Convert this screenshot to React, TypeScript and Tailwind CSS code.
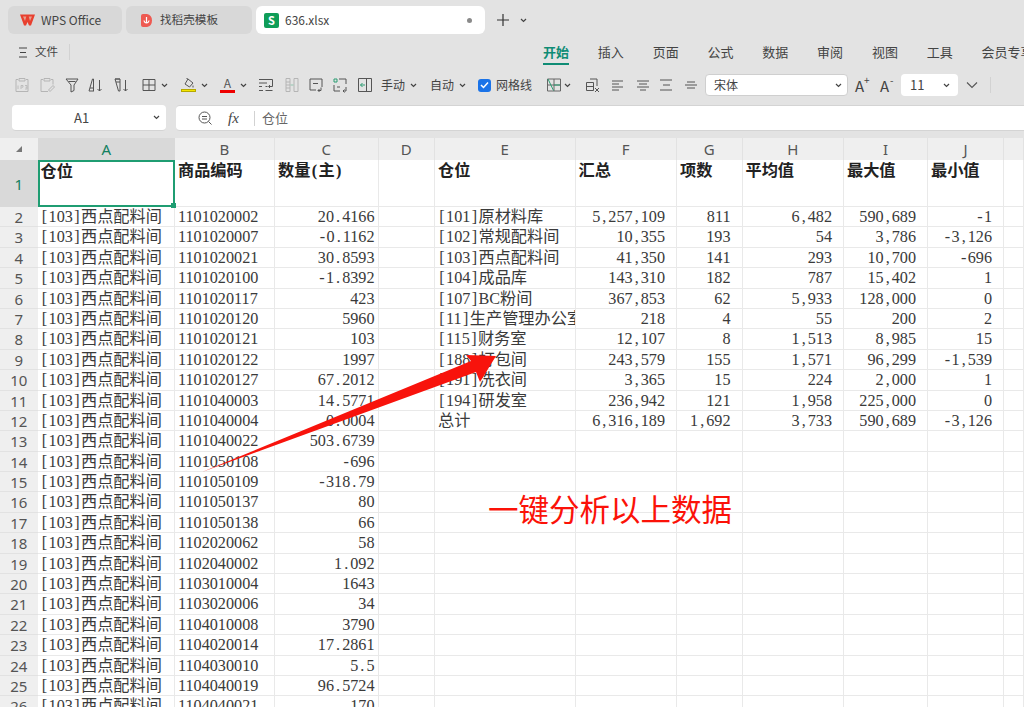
const COLS = "grid grid-rows-[minmax(0,1fr)] grid-cols-[37.5px_137.5px_100px_103.5px_56.5px_140.5px_101.5px_65.5px_101.5px_84px_76px_20px]";

const LEFT: [string, string][] = [
  ["1101020002", "20.4166"],
  ["1101020007", "-0.1162"],
  ["1101020021", "30.8593"],
  ["1101020100", "-1.8392"],
  ["1101020117", "423"],
  ["1101020120", "5960"],
  ["1101020121", "103"],
  ["1101020122", "1997"],
  ["1101020127", "67.2012"],
  ["1101040003", "14.5771"],
  ["1101040004", "0.0004"],
  ["1101040022", "503.6739"],
  ["1101050108", "-696"],
  ["1101050109", "-318.79"],
  ["1101050137", "80"],
  ["1101050138", "66"],
  ["1102020062", "58"],
  ["1102040002", "1.092"],
  ["1103010004", "1643"],
  ["1103020006", "34"],
  ["1104010008", "3790"],
  ["1104020014", "17.2861"],
  ["1104030010", "5.5"],
  ["1104040019", "96.5724"],
  ["1104040021", "170"],
];

const RIGHT: string[][] = [
  ["[101]原材料库", "5,257,109", "811", "6,482", "590,689", "-1"],
  ["[102]常规配料间", "10,355", "193", "54", "3,786", "-3,126"],
  ["[103]西点配料间", "41,350", "141", "293", "10,700", "-696"],
  ["[104]成品库", "143,310", "182", "787", "15,402", "1"],
  ["[107]BC粉间", "367,853", "62", "5,933", "128,000", "0"],
  ["[11]生产管理办公室", "218", "4", "55", "200", "2"],
  ["[115]财务室", "12,107", "8", "1,513", "8,985", "15"],
  ["[188]打包间", "243,579", "155", "1,571", "96,299", "-1,539"],
  ["[191]洗衣间", "3,365", "15", "224", "2,000", "1"],
  ["[194]研发室", "236,942", "121", "1,958", "225,000", "0"],
  ["总计", "6,316,189", "1,692", "3,733", "590,689", "-3,126"],
];

// the sheet font is half width for every latin char, punctuation included
function Half({ text }: { text: string }) {
  return (
    <>
      {text.split(/([\[\]().,\-])/).map((part, i) =>
        i % 2 === 1 ? (
          <span key={i} className="inline-block w-[8.1px] text-center">{part}</span>
        ) : (
          part
        )
      )}
    </>
  );
}

function Chevron({ className = "" }: { className?: string }) {
  return (
    <svg width="7" height="5" viewBox="0 0 7 5" className={`shrink-0 ${className}`}>
      <path d="M1 1l2.5 2.5L6 1" fill="none" stroke="#444" strokeWidth="1.2" />
    </svg>
  );
}

function Ico({ children, className = "", w = 16 }: { children: React.ReactNode; className?: string; w?: number }) {
  return (
    <svg width={w} height="16" viewBox={`0 0 ${w} 16`} fill="none" stroke="#555" strokeWidth="1" className={`shrink-0 ${className}`}>
      {children}
    </svg>
  );
}

function Cell({ text, right, acct, bold }: { text?: string; right?: boolean; acct?: boolean; bold?: boolean }) {
  return (
    <div
      className={`overflow-hidden whitespace-nowrap border-r border-b border-[#e9e9e9] ${right ? "text-right" : ""} ${acct ? "pr-[11px]" : right ? "pr-[3px]" : "pl-[3px]"} ${bold ? "font-bold text-[#222] pt-[1px]" : ""}`}
    >
      {text ? <Half text={text} /> : null}
    </div>
  );
}

function TabBar() {
  return (
    <div className="flex items-center h-[28px] mt-[6px] pl-[8px] gap-[4px] text-[12px] text-[#444]">
      <div className="flex items-center w-[114px] h-[28px] rounded-[6px] bg-[#d8d8d8] pl-[12px] gap-[6px]">
        <svg width="15" height="12" viewBox="0 0 15 12" className="shrink-0">
          <path d="M0 0.500h15L11 11.500H9L7.500 8 6 11.500H4z" fill="#e8402f" />
          <path d="M3 2.500h3.300L5 7zM8.700 2.500H12L10 7z" fill="#e6a08f" />
        </svg>
        <span>WPS Office</span>
      </div>
      <div className="flex items-center w-[126px] h-[28px] rounded-[6px] bg-[#d8d8d8] pl-[14px] gap-[7px]">
        <svg width="13" height="15" viewBox="0 0 13 15" className="shrink-0">
          <path d="M1 3q0-2 2-2h4q5 1 5 6.500t-5 6.500h-4q-2 0-2-2z" fill="#ee5a52" />
          <path d="M6.500 4v6M6.500 10q-2 0-2.500-2.500M6.500 10q2 0 2.500-2.500" stroke="#fff" strokeWidth="1.200" fill="none" />
        </svg>
        <span className="text-[11.600px]">找稻壳模板</span>
      </div>
      <div className="flex items-center w-[229px] h-[28px] rounded-[6px] bg-white pl-[8px] pr-[13px] gap-[6px]">
        <span className="flex items-center justify-center w-[15px] h-[15px] rounded-[2px] bg-[#0f9d58] text-white text-[11px] font-bold">S</span>
        <span>636.xlsx</span>
        <span className="ml-auto w-[5px] h-[5px] rounded-full bg-[#8a8a8a]" />
      </div>
      <svg width="14" height="14" viewBox="0 0 14 14" className="ml-[7px]">
        <path d="M7 1v12M1 7h12" stroke="#333" strokeWidth="1.200" />
      </svg>
      <Chevron className="ml-[6px]" />
    </div>
  );
}

function MenuRow() {
  const items = ["插入", "页面", "公式", "数据", "审阅", "视图", "工具", "会员专享"];
  return (
    <div className="flex items-center h-[26px] mt-[5px] text-[13px] text-[#444] overflow-hidden">
      <svg width="10" height="11" viewBox="0 0 10 11" className="ml-[18px] shrink-0">
        <path d="M1 1h8M2 5.500h6M1 10h8" stroke="#444" strokeWidth="1.100" />
      </svg>
      <span className="ml-[7px] text-[11.500px] whitespace-nowrap shrink-0">文件</span>
      <div className="w-px h-[16px] bg-[#d2d2d2] ml-[11px] shrink-0" />
      <div className="flex flex-col items-center ml-[473px] pt-[3px] shrink-0">
        <span className="font-bold text-[#0f8c75] leading-[20px]">开始</span>
        <div className="w-[26px] h-[2px] bg-[#0f8c75] mt-[1px]" />
      </div>
      <div className="flex gap-[28.800px] ml-[28.800px] whitespace-nowrap">
        {items.map((t) => (
          <span key={t}>{t}</span>
        ))}
      </div>
    </div>
  );
}

function Toolbar() {
  return (
    <div className="flex items-center h-[28px] mt-[6px] pl-[14px] text-[12px] text-[#444] whitespace-nowrap overflow-hidden">
      {/* paste values */}
      <Ico>
        <g stroke="#b5b5b5">
          <path d="M4 2.500H2v12h12v-12h-2M5 1.500h6v2.500H5z" />
          <path d="M4 12V8.500M7 12V8.500h2v1.700H7.500M11 8.500h2v3.500h-2M11.500 10.200H13" strokeWidth="0.800" />
        </g>
      </Ico>
      {/* paste format */}
      <Ico className="ml-[9px]">
        <g stroke="#b5b5b5">
          <path d="M4 2.500H2v12h7M12 2.500h2v5M5 1.500h6v2.500H5z" />
          <path d="M9.500 13l4.500-4.500 1.500 1.500-4.500 4.500z" />
        </g>
      </Ico>
      {/* filter */}
      <Ico className="ml-[9px]">
        <path d="M2 2h12L10 8v5.500L7 15V8zM4.500 4.500h7" />
      </Ico>
      {/* sort asc */}
      <Ico className="ml-[8px]">
        <path d="M1 14L4.500 2h1v12M2 11h3.500M1 14h5M11.500 3v11M9.500 12l2 2 2-2" />
      </Ico>
      {/* sort desc */}
      <Ico className="ml-[10px]">
        <path d="M1 2h5v12M6 2h-5l3.500 12h1.500M2 5h4M11.500 3v11M9.500 12l2 2 2-2" />
      </Ico>
      {/* borders */}
      <Ico className="ml-[11px]">
        <path d="M2 2.500h12v11H2zM8 2.500v11M2 8h12" />
      </Ico>
      <Chevron className="ml-[4px]" />
      {/* fill colour */}
      <div className="flex flex-col items-center ml-[13px]">
        <svg width="12" height="10" viewBox="0 0 12 10" fill="none" stroke="#555">
          <path d="M5 1l5 4-3.500 4L2 6zM5 1L3.500 0.500M10 7.500v2" />
        </svg>
        <div className="w-[15px] h-[3px] bg-[#f5e600] mt-[1px] border border-[#b5a800]" />
      </div>
      <Chevron className="ml-[5px]" />
      {/* font colour */}
      <div className="flex flex-col items-center ml-[12px] w-[15px]">
        <span className="text-[12px] leading-[12px] text-[#555]">A</span>
        <div className="w-[15px] h-[3px] bg-[#ee0000] mt-[1px]" />
      </div>
      <Chevron className="ml-[5px]" />
      {/* wrap */}
      <Ico className="ml-[11px]">
        <path d="M1 2.500h9M1 6h8M1 9.500h3M1 13.500h4M10 2.500h4.500v7H11M12 8l-1.500 1.500L12 11M7.500 9.500h2M7.500 13.500h7" />
      </Ico>
      {/* merge */}
      <Ico className="ml-[10px]">
        <g stroke="#b5b5b5">
          <path d="M2 1.500h4v13H2zM10 1.500h4v13h-4zM2 5h4M2 8h4M2 11h4" />
          <path d="M6.500 8h3" stroke="#8fc4ad" />
        </g>
      </Ico>
      <Ico className="ml-[8px]">
        <path d="M2 2h12v8M2 2v11h6M5 6.500h5M13 10.500v3h-3M11.500 12l-1.500 1.500 1.500 1.500" />
      </Ico>
      <Ico className="ml-[8px]">
        <path d="M7 2h7v5M2 8v6h6M5 10h3M14 10v4h-3M12.500 12.500L11 14l1.500 1.500" />
        <path d="M2 2h3v3H2z" stroke="#2a9d72" />
      </Ico>
      <Ico className="ml-[9px]">
        <path d="M1.500 1.500h13v13h-13zM9.500 1.500v13" />
        <path d="M8 8H3.500M5.500 6L3.500 8l2 2" stroke="#2a9d72" />
      </Ico>
      <span className="ml-[8px]">手动</span>
      <Chevron className="ml-[5px]" />
      <span className="ml-[13px]">自动</span>
      <Chevron className="ml-[5px]" />
      <span className="flex items-center justify-center w-[13px] h-[13px] rounded-[3px] bg-[#1a73e8] ml-[12px]">
        <svg width="9" height="8" viewBox="0 0 9 8">
          <path d="M1 4l2.500 2.500L8 1.500" fill="none" stroke="#fff" strokeWidth="1.500" />
        </svg>
      </span>
      <span className="ml-[5px]">网格线</span>
      {/* freeze */}
      <Ico className="ml-[14px]">
        <path d="M1.500 2h13v12h-13zM8 2v12M1.500 8h13" stroke="#666" />
        <path d="M2 2l5.500 11.500M8 8h6" stroke="#2a9d72" />
      </Ico>
      <Chevron className="ml-[2px]" />
      {/* clear */}
      <Ico className="ml-[14px]">
        <path d="M5 2h7v7M1.500 5.500h7v8h-7zM1.500 9.500h7M10 11l4 4M14 11l-4 4" />
      </Ico>
      {/* aligns */}
      <Ico w={12} className="ml-[11px]">
        <path d="M0 4h11M0 7h7M0 10h11M0 13h7" />
      </Ico>
      <Ico w={12} className="ml-[13px]">
        <path d="M0 4h12M2 7h8M0 10h12M3 13h6" />
      </Ico>
      <Ico w={12} className="ml-[11px]">
        <path d="M0 3h12M3 8h7M0 13h12" />
      </Ico>
      <Ico w={12} className="ml-[13px]">
        <path d="M2 5h8M0 8h12M2 11h8" />
      </Ico>
      {/* font family */}
      <div className="flex items-center w-[143px] h-[22px] ml-[8px] shrink-0 rounded-[4px] bg-white border border-[#cfcfcf] pl-[8px] pr-[5px]">
        <span>宋体</span>
        <Chevron className="ml-auto" />
      </div>
      <span className="relative ml-[7px] w-[16px] shrink-0 text-[15px] leading-none">
        A<span className="absolute -top-[3px] left-[9px] text-[10px]">+</span>
      </span>
      <span className="relative ml-[9px] w-[16px] shrink-0 text-[15px] leading-none">
        A<span className="absolute -top-[3px] left-[10px] text-[10px]">-</span>
      </span>
      <div className="flex items-center w-[57px] h-[22px] ml-[5px] shrink-0 rounded-[4px] bg-white pl-[9px] pr-[8px] text-[13px]">
        <span>11</span>
        <Chevron className="ml-auto" />
      </div>
      <svg width="12" height="8" viewBox="0 0 12 8" className="ml-[8px] shrink-0">
        <path d="M1 1.500l5 5 5-5" fill="none" stroke="#555" strokeWidth="1.100" />
      </svg>
      <div className="w-px h-[16px] bg-[#d2d2d2] ml-[12px] shrink-0" />
    </div>
  );
}

function FormulaBar() {
  return (
    <div className="flex gap-[10px] h-[26px] mt-[6px] pl-[12px] text-[13px] text-[#444]">
      <div className="flex items-center w-[154px] rounded-[4px] bg-white pl-[62px] pr-[6px] border-b border-[#d4d4d4]">
        <span>A1</span>
        <Chevron className="ml-auto" />
      </div>
      <div className="flex items-center flex-1 rounded-l-[4px] bg-white pl-[22px] border-y border-[#d4d4d4]">
        <svg width="15" height="15" viewBox="0 0 15 15" fill="none" stroke="#555">
          <circle cx="6.500" cy="6.500" r="5.500" />
          <path d="M4 5.500h5M4 8h5M10.500 10.500l3 3" />
        </svg>
        <span className="ml-[15px] w-[15px] text-[15px] italic leading-none font-['Liberation_Serif',serif]">fx</span>
        <div className="w-px h-[15px] bg-[#d2d2d2] ml-[11px]" />
        <span className="ml-[7px] text-[#666]">仓位</span>
      </div>
    </div>
  );
}

function Sheet() {
  const heads = ["B", "C", "D", "E", "F", "G", "H", "I", "J", ""];
  return (
    <div className="mt-[7px] flex-1 overflow-hidden bg-white text-[16.200px] leading-[20px] text-[#3a3a3a] font-['Liberation_Serif','Noto_Sans_CJK_SC',serif]">
      {/* column header */}
      <div className={`${COLS} h-[22px] bg-[#efefef] text-[15px] text-[#555] font-['Noto_Sans',sans-serif] leading-[22px] text-center`}>
        <div className="flex items-center justify-center">
          <div className="w-0 h-0 border-l-[6px] border-l-transparent border-b-[6px] border-b-[#777]" />
        </div>
        <div className="bg-[#d9d9d9] text-[#12805f]">A</div>
        {heads.map((h, i) => (
          <div key={i} className="border-r border-[#e2e2e2]">{h}</div>
        ))}
      </div>

      {/* row 1 */}
      <div className={`${COLS} h-[47px]`}>
        <div className="bg-[#d9d9d9] text-[#12805f] text-[15px] flex items-center justify-center font-['Noto_Sans',sans-serif]">1</div>
        <div className="relative border-2 border-[#1f9d72] font-bold text-[#222] pl-[1px]">
          仓位
          <span className="absolute -right-[3px] -bottom-[3px] w-[5px] h-[5px] bg-[#1f9d72]" />
        </div>
        <Cell bold text="商品编码" />
        <Cell bold text="数量(主)" />
        <Cell />
        <Cell bold text="仓位" />
        <Cell bold text="汇总" />
        <Cell bold text="项数" />
        <Cell bold text="平均值" />
        <Cell bold text="最大值" />
        <Cell bold text="最小值" />
        <Cell />
      </div>

      {/* data rows */}
      {LEFT.map(([code, qty], i) => {
        const r = RIGHT[i];
        return (
          <div key={code} className={`${COLS} h-[20.400px]`}>
            <div className="bg-[#efefef] text-[#555] text-[15px] text-center border-b border-[#e2e2e2] font-['Noto_Sans',sans-serif]">{i + 2}</div>
            <Cell text="[103]西点配料间" />
            <Cell text={code} />
            <Cell right text={qty} />
            <Cell />
            <Cell text={r ? r[0] : ""} />
            <Cell right acct text={r ? r[1] : ""} />
            <Cell right acct text={r ? r[2] : ""} />
            <Cell right acct text={r ? r[3] : ""} />
            <Cell right acct text={r ? r[4] : ""} />
            <Cell right acct text={r ? r[5] : ""} />
            <Cell />
          </div>
        );
      })}
    </div>
  );
}

export default function App() {
  return (
    <div className="relative flex flex-col w-[1024px] h-[707px] overflow-hidden bg-[#e3e3e3] font-['Noto_Sans_CJK_SC',sans-serif]">
      <TabBar />
      <MenuRow />
      <Toolbar />
      <FormulaBar />
      <Sheet />

      {/* annotation drawn over the sheet */}
      <svg width="1024" height="707" viewBox="0 0 1024 707" className="absolute inset-0 pointer-events-none">
        <path d="M202 472L471 361 466 355 496 356 480 382 476 372z" fill="#f8130c" />
      </svg>
      <span className="absolute left-[488px] top-[487px] text-[30.500px] leading-[42px] text-[#fb1208] whitespace-nowrap">一键分析以上数据</span>
    </div>
  );
}
